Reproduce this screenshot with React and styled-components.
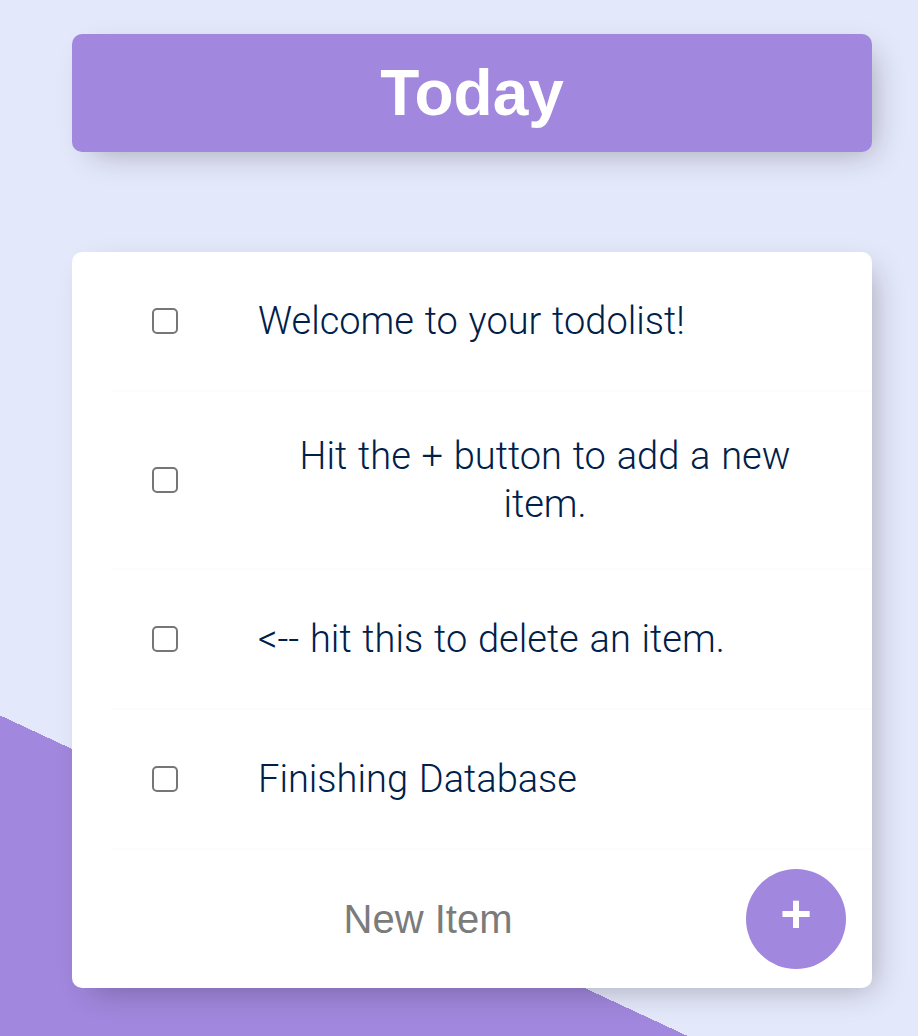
import React, { useState } from 'react';
import styled, { createGlobalStyle } from 'styled-components';

const purple = '#A187DD';
const lavender = '#E4E8FB';

const GlobalStyle = createGlobalStyle`
    html, body {
        margin: 0;
        padding: 0;
    }
    body {
        font-family: Roboto, "Liberation Sans", sans-serif;
    }
`;

const Page = styled.div`
    min-height: 100vh;
    box-sizing: border-box;
    padding: 34px 0 0 72px;
    display: flex;
    flex-direction: column;
    align-items: flex-start;
    background-color: ${lavender};
    background-image: linear-gradient(25deg, ${purple} 21.9%, ${lavender} 21.9%);
`;

const Box = styled.div`
    width: 800px;
    border-radius: 10px;
    background: ${(p) => (p.$heading ? purple : '#fff')};
    margin-top: ${(p) => (p.$heading ? 0 : 100)}px;
    box-shadow: 10px 10px 30px -10px rgba(0, 0, 0, 0.3);
    text-align: center;
`;

const Title = styled.h1`
    margin: 0;
    padding: 20px;
    font-family: "Liberation Sans", Arial, sans-serif;
    font-size: 64px;
    line-height: 78px;
    font-weight: 700;
    color: #fff;
`;

const ItemList = styled.form`
    margin-left: 40px;
    text-align: center;
`;

const Item = styled.div`
    box-sizing: border-box;
    min-height: 140px;
    display: flex;
    align-items: center;
    border-bottom: 2px solid #fcfcfc;
`;

const Check = styled.input`
    appearance: none;
    flex: none;
    box-sizing: border-box;
    width: 26px;
    height: 26px;
    margin: 40px;
    border: 2px solid #767676;
    border-radius: 5px;
    background: #fff;
    cursor: pointer;
    &:checked {
        background: ${purple};
        border-color: ${purple};
    }
`;

const ItemText = styled.p`
    margin: 0;
    padding: 40px;
    font-size: 38px;
    line-height: 48px;
    font-weight: 300;
    word-spacing: 1.5px;
    color: #00204a;
    text-decoration: ${(p) => (p.$done ? 'line-through' : 'none')};
    text-decoration-color: ${purple};
`;

const NewItemRow = styled.form`
    height: 138px;
    box-sizing: border-box;
    padding-left: 43px;
    display: flex;
    align-items: center;
    gap: 5px;
`;

const TextInput = styled.input`
    width: 626px;
    height: 120px;
    padding: 0;
    border: none;
    outline: none;
    background: transparent;
    text-align: center;
    font-family: "Liberation Sans", Arial, sans-serif;
    font-size: 40px;
    color: #00204a;
    &::placeholder {
        color: #7b7b7b;
    }
`;

const AddButton = styled.button`
    width: 100px;
    height: 100px;
    flex: none;
    border: 0;
    border-radius: 50%;
    background: ${purple};
    color: #fff;
    font-family: "Liberation Sans", Arial, sans-serif;
    font-weight: 700;
    font-size: 54px;
    line-height: 1;
    padding: 0 0 12px;
    cursor: pointer;
`;

const initialItems = [
    'Welcome to your todolist!',
    'Hit the + button to add a new item.',
    '<-- hit this to delete an item.',
    'Finishing Database',
];

export default function App() {
    const [items, setItems] = useState(initialItems.map((text) => ({ text, done: false })));
    const [draft, setDraft] = useState('');

    const toggle = (i) => {
        setItems(items.map((it, j) => (j === i ? { ...it, done: !it.done } : it)));
    };

    const addItem = (e) => {
        e.preventDefault();
        if (!draft.trim()) return;
        setItems([...items, { text: draft, done: false }]);
        setDraft('');
    };

    return (
        <Page>
            <GlobalStyle />
            <Box $heading>
                <Title>Today</Title>
            </Box>
            <Box>
                <ItemList onSubmit={(e) => e.preventDefault()}>
                    {items.map((it, i) => (
                        <Item key={i}>
                            <Check type='checkbox' checked={it.done} onChange={() => toggle(i)} />
                            <ItemText $done={it.done}>{it.text}</ItemText>
                        </Item>
                    ))}
                </ItemList>
                <NewItemRow onSubmit={addItem}>
                    <TextInput
                        type='text'
                        placeholder='New Item'
                        autoComplete='off'
                        value={draft}
                        onChange={(e) => setDraft(e.target.value)}
                    />
                    <AddButton type='submit'>+</AddButton>
                </NewItemRow>
            </Box>
        </Page>
    );
}
